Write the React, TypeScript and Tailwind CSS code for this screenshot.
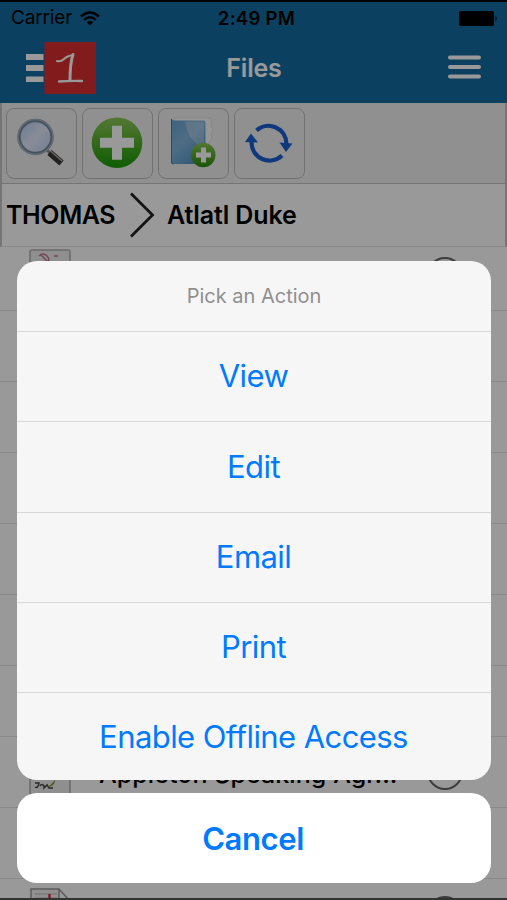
import type { ReactNode } from 'react';

const actions = ['View', 'Edit', 'Email', 'Print', 'Enable Offline Access'];

const files = [
  { name: '', kind: 'pdf' },
  { name: '', kind: 'doc' },
  { name: '', kind: 'doc' },
  { name: '', kind: 'doc' },
  { name: '', kind: 'doc' },
  { name: '', kind: 'doc' },
  { name: '', kind: 'doc' },
  { name: 'Appleton Speaking Agr...', kind: 'signed' },
  { name: '', kind: 'doc' },
  { name: '', kind: 'page' },
];

const SearchIcon = () => (
  <svg className="w-[52px] h-[52px]" viewBox="0 0 52 52" fill="none">
    <defs>
      <linearGradient id="lens" x1="0" y1="0" x2="1" y2="1">
        <stop offset="0" stopColor="#b4cbf5" />
        <stop offset="0.5" stopColor="#e2eafb" />
        <stop offset="1" stopColor="#c0d2f5" />
      </linearGradient>
    </defs>
    <path d="M31 32l4 4" stroke="#8d8d8d" strokeWidth="3" />
    <path d="M34.500 35.500L46.500 46" stroke="#3a3434" strokeWidth="6.500" />
    <path d="M35.500 34L47 44" stroke="#b5b0b0" strokeWidth="1.500" />
    <circle cx="20.500" cy="20" r="16.500" fill="url(#lens)" stroke="#76899b" strokeWidth="3.400" />
    <circle cx="20.500" cy="20" r="17.300" stroke="#a9b6c2" strokeWidth="1.300" />
  </svg>
);

const AddIcon = () => (
  <svg className="w-[52px] h-[52px]" viewBox="0 0 52 52">
    <defs>
      <linearGradient id="add" x1="0" y1="0" x2="0" y2="1">
        <stop offset="0" stopColor="#8cc858" />
        <stop offset="0.5" stopColor="#54b02c" />
        <stop offset="1" stopColor="#179c08" />
      </linearGradient>
    </defs>
    <circle cx="26" cy="25.700" r="25.300" fill="url(#add)" />
    <path d="M21 8.700h10v12h12v10h-12v12h-10v-12H9v-10h12z" fill="#fff" />
  </svg>
);

const FolderIcon = () => (
  <svg className="w-[52px] h-[52px]" viewBox="0 0 52 52">
    <defs>
      <linearGradient id="folder" x1="0" y1="0" x2="0.7" y2="1">
        <stop offset="0" stopColor="#67a3d2" />
        <stop offset="0.5" stopColor="#82b6dc" />
        <stop offset="1" stopColor="#5694c6" />
      </linearGradient>
      <linearGradient id="badge" x1="0" y1="0" x2="0" y2="1">
        <stop offset="0" stopColor="#8ac653" />
        <stop offset="1" stopColor="#2c8d0d" />
      </linearGradient>
    </defs>
    <path d="M7 3q0-2 2-2h32q3 0 3 3v5l2 4-2 4 1 4-5 7H8z" fill="#fafafa" stroke="#dcdcdc" strokeWidth="0.8" />
    <path d="M4 2l3 1.500h29.500q2 0 2 2V47H6q-2 0-2-2z" fill="url(#folder)" />
    <path d="M18 4.500h19V32Q21 24 18 4.500z" fill="#fff" opacity="0.25" />
    <path d="M4.500 2v43q0 2 2 2" fill="none" stroke="#457da8" strokeWidth="1" />
    <circle cx="36.300" cy="38" r="12.200" fill="url(#badge)" />
    <path d="M34 30.500h5v5h5v5h-5v5h-5v-5h-5v-5h5z" fill="#fff" />
  </svg>
);

const SyncIcon = () => (
  <svg className="w-[52px] h-[52px]" viewBox="0 0 52 52" fill="none">
    <g transform="translate(1 0)">
      <path d="M12.500 13.500A18 18 0 0 1 42.500 27" stroke="#1c5fd0" strokeWidth="4.200" />
      <path d="M38 38.500A18 18 0 0 1 7.500 25" stroke="#1c5fd0" strokeWidth="4.200" />
      <path d="M35.500 25.500l13 1-6.500 8.500z" fill="#1c5fd0" />
      <path d="M1 25l6-8.500 7 9z" fill="#1c5fd0" />
    </g>
  </svg>
);

const ToolButton = ({ children }: { children: ReactNode }) => (
  <button className="flex h-[71px] w-[71px] items-center justify-center rounded-[8px] border border-[#bdbdbd] pr-px">
    {children}
  </button>
);

const FileIcon = ({ kind }: { kind: string }) => (
  <svg className="-mt-0.5 h-[50px] w-[42px] shrink-0" viewBox="0 0 42 50" fill="none">
    {kind === 'page' ? (
      <path d="M2 1h28l10 11v37H2zM30 1v11h10" fill="#f2f2f2" stroke="#9a9a9a" strokeWidth="1.500" />
    ) : (
      <rect x="1" y="1" width="40" height="48" rx="2" fill="#eeeeee" stroke="#b0b0b0" strokeWidth="1.500" />
    )}
    {kind === 'pdf' && <path d="M10 7q4-4 8 0t-1 10M12 6l9 9M25 7h4" stroke="#c0788a" strokeWidth="1.500" />}
    {kind === 'signed' && (
      <>
        <path d="M6 37h4q-1 6-4 4M11 40q2-3 4 0v2l3-3 2 3h4" stroke="#444" strokeWidth="1.500" />
        <path d="M16 41q7-1 10-8 0 9-10 8z" fill="#8b8c28" />
      </>
    )}
    {kind === 'page' && (
      <>
        <path d="M6 6h22M6 10h22" stroke="#ccc" strokeWidth="1.500" />
        <path d="M20.500 6v12" stroke="#d82f50" strokeWidth="2.500" />
      </>
    )}
  </svg>
);

const Header = () => (
  <header className="h-[103px] shrink-0 border-t-2 border-black bg-[#146ca0]">
    {/* Status bar */}
    <div className="grid h-8 grid-cols-3 items-center pl-[11px] pr-[9px] pt-px text-[19px] text-black">
      <div className="flex items-center gap-2">
        <span className="tracking-[-0.15px]">Carrier</span>
        <svg className="h-[15px] w-5" viewBox="0 0 20 15" fill="none" stroke="#000">
          <path d="M1 5.500Q10-2.500 19 5.500" strokeWidth="2.400" />
          <path d="M4.200 8.800Q10 3.800 15.800 8.800" strokeWidth="2.400" />
          <path d="M6.800 11.300Q10 8.500 13.200 11.300L10 14.500z" fill="#000" stroke="none" />
        </svg>
      </div>
      <span className="pl-1 text-center text-[18.5px] font-semibold tracking-[0.3px] whitespace-nowrap">2:49 PM</span>
      <svg className="h-[15px] w-[39px] justify-self-end" viewBox="0 0 39 15">
        <rect width="35" height="15" rx="2" />
        <path d="M36.500 4.500q2.500 3 0 6z" />
      </svg>
    </div>
    {/* Title bar */}
    <div className="grid h-[68px] grid-cols-3 items-center pl-[26px] pr-[26px]">
      <div className="flex items-center">
        <svg className="h-7 w-[18px]" viewBox="0 0 18 28" fill="#fff">
          <path d="M0 0h17.500v6H0zM0 11h17.500v6H0zM0 22.500h17.500v6H0z" />
        </svg>
        <svg className="h-[52px] w-[52px]" viewBox="0 0 52 52" fill="none" stroke="#fff" strokeLinecap="round">
          <path d="M.5 0H52v52H.5z" fill="#d92d2d" stroke="none" />
          <path d="M13 19q4 1 7-2t9-4" strokeWidth="2" />
          <path d="M29 12.500q-3 9-3 26" strokeWidth="3" />
          <path d="M15 39.500q10-.8 23-.5" strokeWidth="2.400" />
        </svg>
      </div>
      <h1 className="pl-px pt-0.5 text-center text-[25px] font-semibold tracking-[-0.2px] text-white">Files</h1>
      <svg className="-mt-0.5 h-6 w-[34px] justify-self-end" viewBox="0 0 34 24" stroke="#fff" strokeWidth="4" strokeLinecap="round">
        <path d="M3 2.500h29M3 12h29M3 21.500h29" />
      </svg>
    </div>
  </header>
);

const App = () => {
  return (
    <div className="relative h-[900px] w-[507px] overflow-hidden bg-white font-['Inter','Liberation_Sans',sans-serif]">
      <div className="flex h-full flex-col">
        <Header />

        {/* Toolbar */}
        <div className="flex h-[81px] shrink-0 items-center gap-[5px] border-x-2 border-b border-[#c4c4c4] bg-[#f0f0f0] pl-1">
          <ToolButton><SearchIcon /></ToolButton>
          <ToolButton><AddIcon /></ToolButton>
          <ToolButton><FolderIcon /></ToolButton>
          <ToolButton><SyncIcon /></ToolButton>
        </div>

        {/* Breadcrumb */}
        <div className="flex h-[63px] shrink-0 items-center border-x-2 border-b border-x-[#c4c4c4] border-b-[#e4e4e4] pl-1 text-[25px] font-semibold text-black">
          <span className="w-[123px] pt-0.5 tracking-[-0.4px]">THOMAS</span>
          <svg className="h-[46px] w-[26px]" viewBox="0 0 26 46" fill="none" stroke="#222" strokeWidth="2.800">
            <path d="M2 1.500L23.500 23 2 44.500" />
          </svg>
          <span className="ml-3 pt-0.5 tracking-[-0.1px]">Atlatl Duke</span>
        </div>

        {/* File list */}
        <ul className="-mt-[7px]">
          {files.map((file, i) => (
            <li key={i} className="flex h-[71px] items-center border-b border-[#e4e4e4] pl-[29px] pr-11">
              <FileIcon kind={file.kind} />
              <span className="ml-7 flex-1 whitespace-nowrap pt-1.5 text-[25px] font-medium tracking-[0.07px]">{file.name}</span>
              <span className="-mt-px h-[36px] w-[36px] rounded-full border-[2.5px] border-[#666]" />
            </li>
          ))}
        </ul>
      </div>

      {/* Action sheet */}
      <div className="absolute inset-0 flex flex-col justify-end gap-[13px] border-b-2 border-[#333] bg-black/40 pl-[17px] pr-4 pb-[15px]">
        <div className="flex h-[519px] flex-col overflow-hidden rounded-[20px] bg-[#f6f6f6] text-center">
          <p className="h-[70px] shrink-0 pt-5 text-[20px] text-[#8f8f8f]">Pick an Action</p>
          {actions.map((action) => (
            <button
              key={action}
              className="flex h-[90.25px] w-full shrink-0 items-center justify-center border-t border-[#d8d8d9] pr-px text-[31px] tracking-[-0.57px] text-[#007aff] last:h-[88px] last:pt-px"
            >
              {action}
            </button>
          ))}
        </div>
        <button className="h-[90px] rounded-[20px] bg-white pr-0.5 pt-0.5 text-[31px] font-semibold tracking-[-0.4px] text-[#007aff]">Cancel</button>
      </div>
    </div>
  );
};

export default App;
